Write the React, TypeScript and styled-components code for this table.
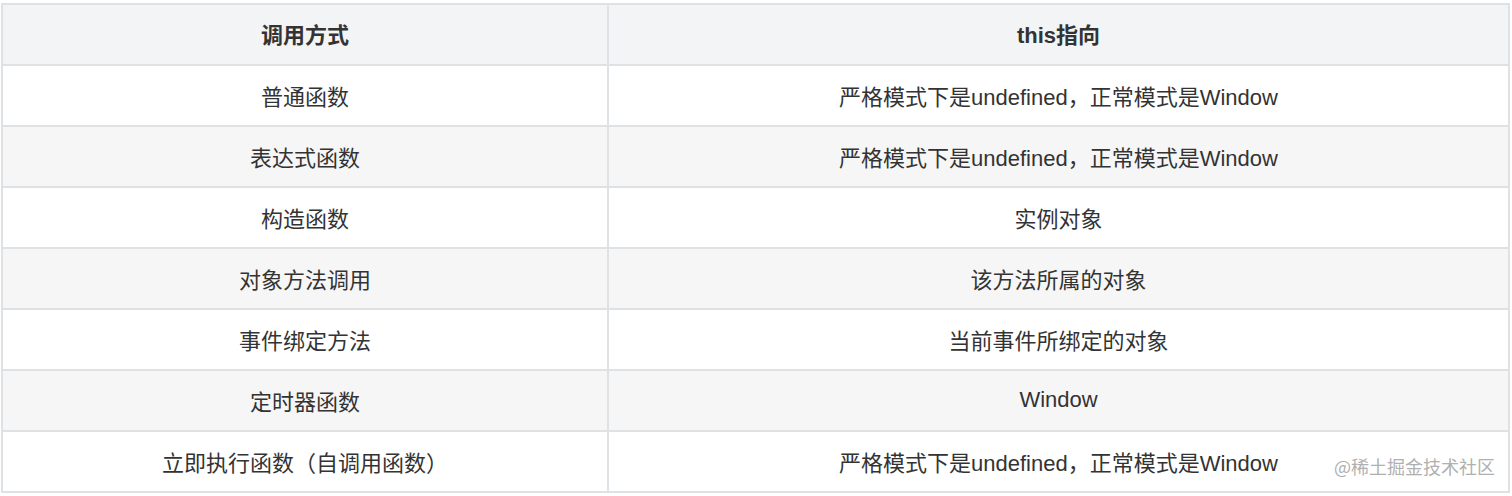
import React from "react";
import styled, { createGlobalStyle } from "styled-components";

const GlobalStyle = createGlobalStyle`
    html, body {
        margin: 0;
        padding: 0;
        background: #ffffff;
    }
    body {
        font-family: "Liberation Sans", "Noto Sans CJK SC", sans-serif;
        color: #333333;
    }
`;

const Page = styled.div`
    position: relative;
    width: 1512px;
    height: 496px;
    padding: 3px 0 0 1px;
    box-sizing: border-box;
    overflow: hidden;
`;

const Table = styled.table`
    width: 1509px;
    border-collapse: collapse;
    table-layout: fixed;
    font-size: 22px;
`;

const HeadCell = styled.th`
    height: 56px;
    padding: 0 0 3px;
    border: 2px solid #dfe2e5;
    background: #f3f4f5;
    font-weight: bold;
    color: #333333;
    text-align: center;
    vertical-align: middle;
`;

const Row = styled.tr<{ $striped: boolean }>`
    background: ${props => (props.$striped ? "#f6f6f6" : "#ffffff")};
`;

const Cell = styled.td`
    height: 57px;
    padding: 0 0 2px;
    border: 2px solid #dfe2e5;
    color: #333333;
    text-align: center;
    vertical-align: middle;
`;

const Watermark = styled.div`
    position: absolute;
    right: 17px;
    bottom: 17px;
    font-size: 18px;
    color: #b0b0b0;
    font-family: "Noto Sans CJK SC", sans-serif;
    pointer-events: none;
`;

const rows = [
    ["普通函数", "严格模式下是undefined，正常模式是Window"],
    ["表达式函数", "严格模式下是undefined，正常模式是Window"],
    ["构造函数", "实例对象"],
    ["对象方法调用", "该方法所属的对象"],
    ["事件绑定方法", "当前事件所绑定的对象"],
    ["定时器函数", "Window"],
    ["立即执行函数（自调用函数）", "严格模式下是undefined，正常模式是Window"],
];

export default function App() {
    return (
        <>
            <GlobalStyle />
            <Page>
                <Table>
                    <colgroup>
                        <col style={{ width: 606 }} />
                        <col />
                    </colgroup>
                    <thead>
                        <tr>
                            <HeadCell>调用方式</HeadCell>
                            <HeadCell>this指向</HeadCell>
                        </tr>
                    </thead>
                    <tbody>
                        {rows.map(([way, target], i) => (
                            <Row key={way} $striped={i % 2 === 1}>
                                <Cell>{way}</Cell>
                                <Cell>{target}</Cell>
                            </Row>
                        ))}
                    </tbody>
                </Table>
                <Watermark>@稀土掘金技术社区</Watermark>
            </Page>
        </>
    );
}
